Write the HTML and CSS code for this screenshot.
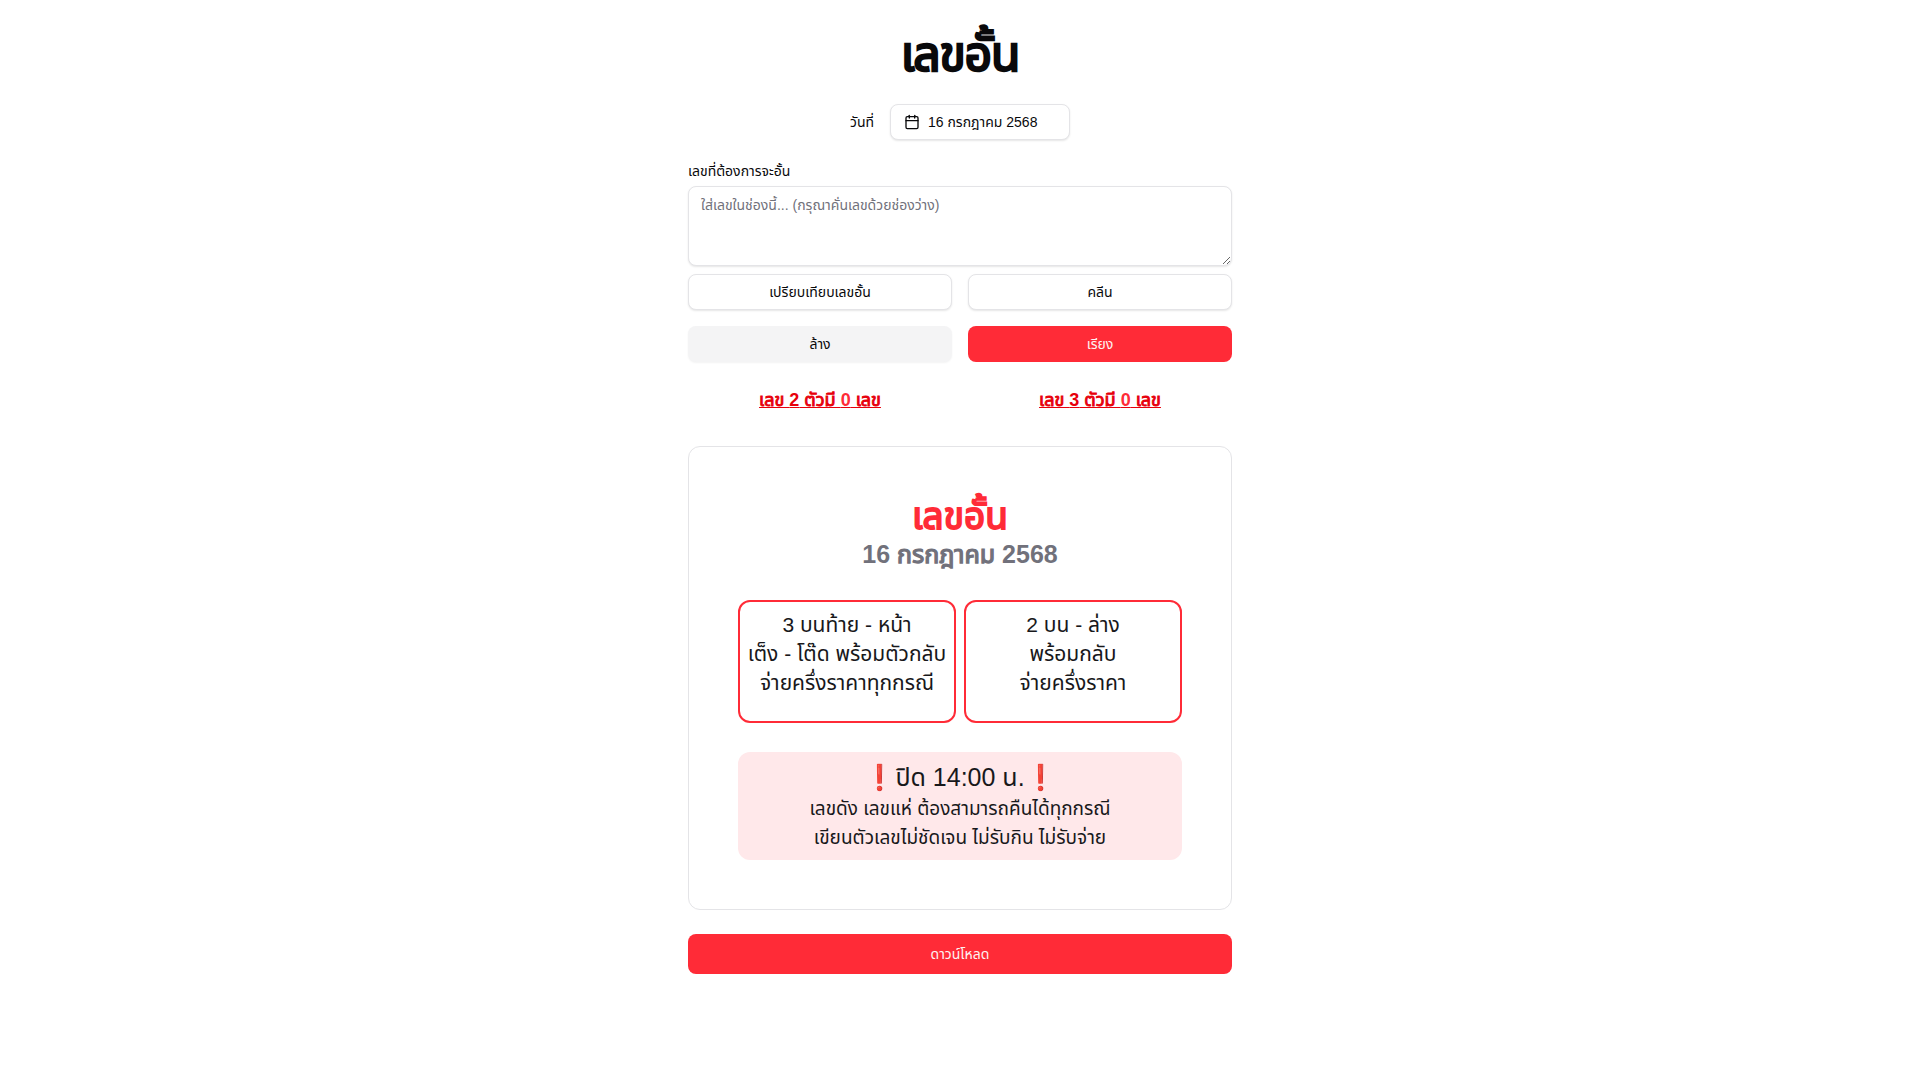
FILE: index.html
```html
<!DOCTYPE html>
<html lang="en">
  <head>
    <meta charset="UTF-8" />
    <meta name="viewport" content="width=device-width, initial-scale=1.0" />
    <title>เลขอั้น</title>
    <link rel="stylesheet" href="styles.css">
  </head>

  <body>
    <main class="container">
      <h1 class="title heavy">เลขอั้น</h1>

      <div class="date-row">
        <label for="date">วันที่</label>
        <button id="date" class="btn btn-outline btn-date" type="button">
          <svg class="icon" viewBox="0 0 24 24" fill="none" stroke="currentColor" stroke-width="2" stroke-linecap="round" stroke-linejoin="round" aria-hidden="true">
            <path d="M8 2v4" />
            <path d="M16 2v4" />
            <rect width="18" height="18" x="3" y="4" rx="2" />
            <path d="M3 10h18" />
          </svg>
          16 กรกฎาคม 2568
        </button>
      </div>

      <div class="field">
        <label for="numbers">เลขที่ต้องการจะอั้น</label>
        <textarea id="numbers" placeholder="ใส่เลขในช่องนี้... (กรุณาคั่นเลขด้วยช่องว่าง)"></textarea>
      </div>

      <div class="actions">
        <button class="btn btn-outline" type="button">เปรียบเทียบเลขอั้น</button>
        <button class="btn btn-outline" type="button">คลีน</button>
        <button class="btn btn-secondary" type="button">ล้าง</button>
        <button class="btn btn-primary" type="button">เรียง</button>
      </div>

      <div class="counts">
        <h2 class="heavy">เลข <b>2</b> ตัวมี <b class="count">0</b> เลข</h2>
        <h2 class="heavy">เลข <b>3</b> ตัวมี <b class="count">0</b> เลข</h2>
      </div>

      <section class="card">
        <h2 class="card-title heavy">เลขอั้น</h2>
        <p class="card-date heavy"><b>16</b> กรกฎาคม <b>2568</b></p>
        <div class="rules">
          <div class="rule">
            <p>3 บนท้าย - หน้า</p>
            <p>เต็ง - โต๊ด พร้อมตัวกลับ</p>
            <p>จ่ายครึ่งราคาทุกกรณี</p>
          </div>
          <div class="rule">
            <p>2 บน - ล่าง</p>
            <p>พร้อมกลับ</p>
            <p>จ่ายครึ่งราคา</p>
          </div>
        </div>
        <div class="notice">
          <p class="notice-time">❗ปิด 14:00 น.❗</p>
          <p>เลขดัง เลขแห่ ต้องสามารถคืนได้ทุกกรณี</p>
          <p>เขียนตัวเลขไม่ชัดเจน ไม่รับกิน ไม่รับจ่าย</p>
        </div>
      </section>

      <button class="btn btn-primary btn-lg" type="button">ดาวน์โหลด</button>
    </main>
  </body>
</html>
```
FILE: styles.css
```css
* {
  box-sizing: border-box;
}
body {
  margin: 0;
  background-color: white;
  color: #09090b;
  font-family: "Liberation Sans", "Noto Sans Thai", sans-serif;
  font-size: 14px;
  line-height: 20px;
}
h1,
h2,
p {
  margin: 0;
}
.container {
  max-width: 576px;
  margin: 0 auto;
  padding: 32px 16px;
}
/* regular Thai letters thickened with a stroke, digits use the real bold */
.heavy {
  font-weight: 400;
  -webkit-text-stroke: 0.05em currentColor;
}
.heavy b {
  -webkit-text-stroke: 0;
}
.title {
  font-size: 48px;
  line-height: 46px;
  letter-spacing: -0.025em;
  text-align: center;
}

.date-row {
  display: flex;
  justify-content: center;
  align-items: center;
  gap: 16px;
  margin-top: 26px;
}
.btn {
  display: flex;
  justify-content: center;
  align-items: center;
  gap: 8px;
  height: 36px;
  padding: 0 16px;
  border: 0;
  border-radius: 8px;
  color: inherit;
  font: inherit;
  cursor: pointer;
}
.btn-outline {
  border: 1px solid #e4e4e7;
  background-color: white;
  box-shadow: 0 1px 2px rgba(0, 0, 0, 0.1);
}
.btn-secondary {
  background-color: #f4f4f5;
  box-shadow: 0 1px 2px rgba(0, 0, 0, 0.05);
}
.btn-primary {
  background-color: #ff2b37;
  color: #fef2f2;
}
.btn-lg {
  width: 100%;
  height: 40px;
  margin-top: 24px;
}
.btn-date {
  width: 180px;
  padding: 0 13px;
  justify-content: flex-start;
}
.icon {
  width: 16px;
  height: 16px;
}

.field {
  display: flex;
  flex-direction: column;
  gap: 4px;
  margin-top: 20px;
  line-height: 22px;
}
textarea {
  width: 100%;
  height: 80px;
  padding: 8px 12px;
  border: 1px solid #e4e4e7;
  border-radius: 8px;
  background-color: white;
  box-shadow: 0 1px 2px rgba(0, 0, 0, 0.1);
  font: inherit;
  line-height: 20px;
  resize: vertical;
}
textarea::-webkit-scrollbar {
  width: 6px;
  height: 6px;
}
textarea::placeholder {
  color: #71717b;
}
.actions {
  display: grid;
  grid-template-columns: 1fr 1fr;
  gap: 16px;
  margin-top: 8px;
}
.counts {
  display: grid;
  grid-template-columns: 1fr 1fr;
  gap: 16px;
  margin-top: 24px;
  color: #e7000b;
  text-align: center;
}
.counts h2 {
  font-size: 18px;
  line-height: 28px;
  text-decoration: underline;
}
.counts .count {
  color: #ff2b37;
}

.card {
  margin-top: 32px;
  padding: 49px;
  border: 1px solid #e4e4e7;
  border-radius: 12px;
  color: #18181b;
  text-align: center;
  font-size: 21px;
  line-height: 29px;
}
.card-title {
  color: #ff2b37;
  font-size: 37px;
  line-height: 42px;
}
.card-date {
  color: #71717b;
  font-size: 25px;
  line-height: 32px;
}
.rules {
  display: grid;
  grid-template-columns: 1fr 1fr;
  gap: 8px;
  margin-top: 30px;
}
.rule {
  padding: 8px 0 24px;
  border: 2px solid #ff2b37;
  border-radius: 12px;
}
.notice {
  margin-top: 29px;
  padding: 8px;
  border-radius: 12px;
  background-color: #ffe8ea;
  font-size: 19px;
}
.notice-time {
  font-size: 25px;
  line-height: 34px;
}
```
